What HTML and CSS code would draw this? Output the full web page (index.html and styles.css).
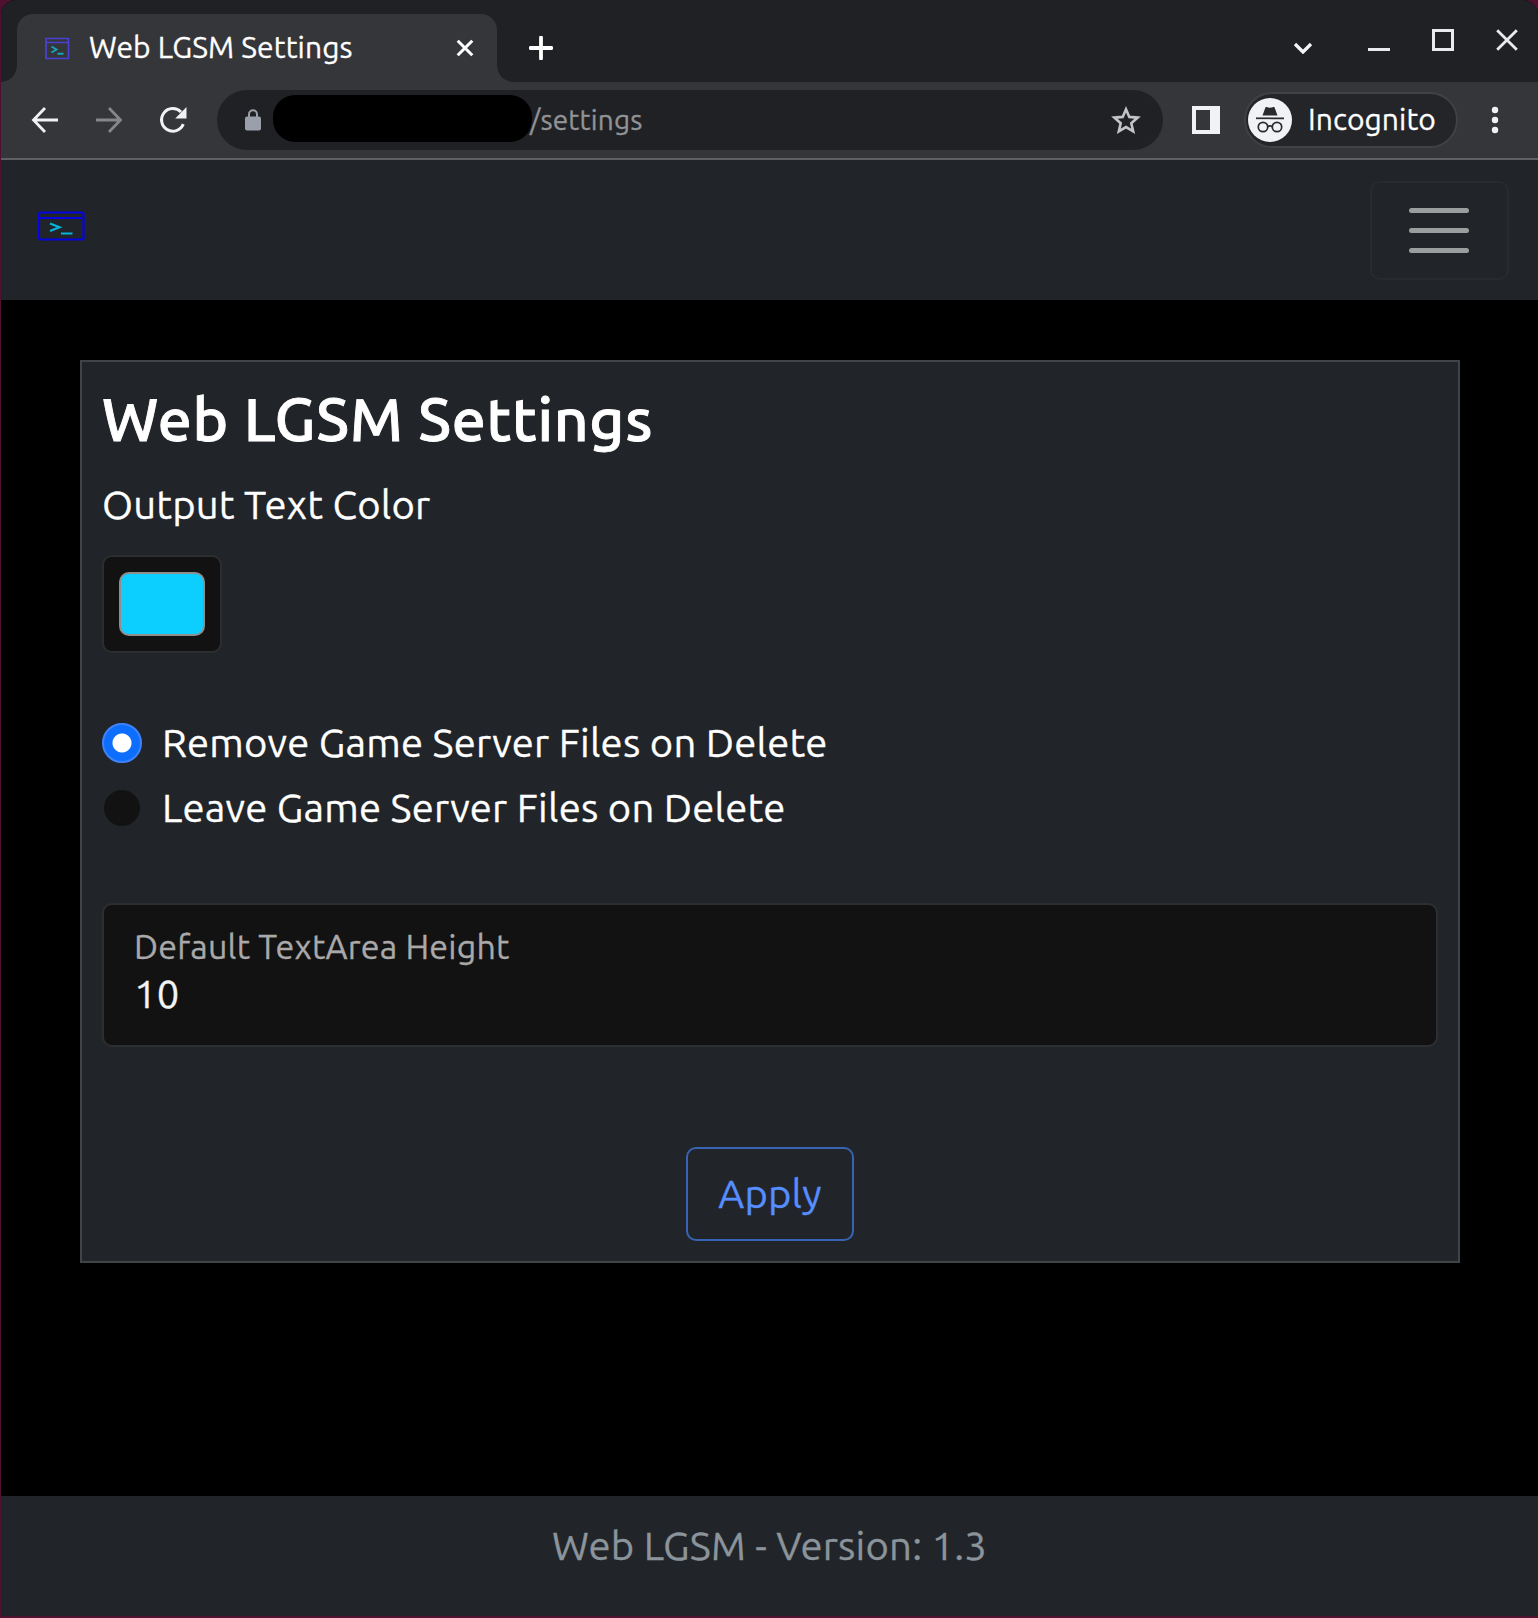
FILE: index.html
```html
<!DOCTYPE html>
<html lang="en">
<head>
<meta charset="utf-8">
<title>Web LGSM Settings</title>
<link rel="stylesheet" href="styles.css">
</head>
<body>
<div class="window">
  <header class="tabstrip">
    <div class="tab">
      <svg class="favicon" width="25" height="23" viewBox="0 0 25 23"><path d="M1 1.500h22.500v20H1zM1 5.500h22.500" fill="none" stroke="#4a41d3" stroke-width="1.700"/><path d="M6.500 9.500l5 3-5 3" fill="none" stroke="#15a5bd" stroke-width="1.900"/><path d="M12.500 16.800h6" stroke="#15a5bd" stroke-width="2"/></svg>
      <span class="tab-title">Web LGSM Settings</span>
      <svg class="tab-close" width="18" height="20" viewBox="0 0 18 20"><path d="M1.700 2.700l14.600 14.600M16.300 2.700L1.700 17.300" stroke="#fff" stroke-width="3"/></svg>
    </div>
    <svg class="new-tab" width="24" height="24" viewBox="0 0 24 24"><path d="M12 1.500v21M1.500 12h21" stroke="#fff" stroke-width="3.800" stroke-linecap="round"/></svg>
    <div class="window-controls">
      <svg class="chevron" width="20" height="12" viewBox="0 0 20 12"><path d="M2 2l8 8 8-8" fill="none" stroke="#f4f5f7" stroke-width="3.300"/></svg>
      <svg width="22" height="22" viewBox="0 0 22 22"><path d="M0 20.500h22" stroke="#e9eaee" stroke-width="3"/></svg>
      <svg width="22" height="22" viewBox="0 0 22 22"><path d="M1.500 1.500h19v19h-19z" fill="none" stroke="#e9eaee" stroke-width="3"/></svg>
      <svg width="22" height="22" viewBox="0 0 22 22"><path d="M1.200 1.200l19.600 19.600M20.800 1.200L1.200 20.800" stroke="#e9eaee" stroke-width="2.800"/></svg>
    </div>
  </header>
  <div class="toolbar">
    <svg class="back" width="28" height="28" viewBox="0 0 28 28"><path d="M27 14H3M14 2L2.500 14 14 26" fill="none" stroke="#f1f2f5" stroke-width="2.800"/></svg>
    <svg class="forward" width="28" height="28" viewBox="0 0 28 28"><path d="M1 14h24M14 2l11.500 12L14 26" fill="none" stroke="#858688" stroke-width="2.800"/></svg>
    <svg class="reload" width="28" height="28" viewBox="0 0 28 28"><path d="M24.300 18.200A11.300 11.300 0 1 1 22 6" fill="none" stroke="#f1f2f5" stroke-width="3"/><path d="M27.500 1v11.500H16.200z" fill="#f1f2f5"/></svg>
    <div class="omnibox">
      <svg class="lock" width="18" height="22" viewBox="0 0 18 22"><rect x="1" y="7.500" width="16" height="14" rx="2" fill="#9aa0a9"/><path d="M5 8V5.200a4 4 0 0 1 8 0V8" fill="none" stroke="#9aa0a9" stroke-width="2"/></svg>
      <span class="redacted"></span>
      <span class="path">/settings</span>
      <svg class="star" width="32" height="31" viewBox="0 0 32 31"><path d="M16 4.200l3.300 7.700 8.400.7-6.400 5.600 1.900 8.200-7.200-4.300-7.200 4.300 1.900-8.200-6.400-5.600 8.400-.7z" fill="none" stroke="#c3c4c6" stroke-width="2.600"/></svg>
    </div>
    <svg class="side-panel" width="28" height="28" viewBox="0 0 28 28"><path fill="#f1f2f5" fill-rule="evenodd" d="M0 0h28v28H0zM4 4v20h14V4z"/></svg>
    <div class="incognito">
      <svg width="44" height="44" viewBox="0 0 44 44"><circle cx="22" cy="22" r="22" fill="#f1f2f6"/><path d="M14.500 17.500l3-8.200c1.500-1 3 .5 4.500.5s3-1.500 4.500-.5l3 8.200z" fill="#292a2e"/><path d="M8 20.300h28" stroke="#292a2e" stroke-width="1.700"/><g fill="none" stroke="#292a2e" stroke-width="1.700"><circle cx="15" cy="29" r="4.700"/><circle cx="29" cy="29" r="4.700"/><path d="M19.700 28.700q2.300-1.700 4.600 0"/></g></svg>
      <span class="incognito-label">Incognito</span>
    </div>
    <svg class="menu" width="8" height="28" viewBox="0 0 8 28"><g fill="#f1f2f5"><circle cx="4" cy="4" r="3.200"/><circle cx="4" cy="14" r="3.200"/><circle cx="4" cy="24" r="3.200"/></g></svg>
  </div>
  <nav class="navbar">
    <svg class="brand" width="48" height="30" viewBox="0 0 48 30"><rect x="2" y="1.500" width="44.500" height="27" rx="1.500" fill="none" stroke="#0505e4" stroke-width="2.200"/><path d="M2 7h43" stroke="#0505e4" stroke-width="2.200"/><path d="M13 12.500l9.500 3.700-9.500 3.700" fill="none" stroke="#06b4dc" stroke-width="2.200"/><path d="M24 22.500h11.500" stroke="#06b4dc" stroke-width="2"/></svg>
    <button class="toggler" aria-label="Menu"><span></span><span></span><span></span></button>
  </nav>
  <main class="content">
    <form class="card">
      <h1>Web LGSM Settings</h1>
      <span class="color-label">Output Text Color</span>
      <div class="color-input"><span class="swatch"></span></div>
      <div class="options">
        <div class="option"><span class="radio checked"></span><span class="option-label">Remove Game Server Files on Delete</span></div>
        <div class="option"><span class="radio"></span><span class="option-label">Leave Game Server Files on Delete</span></div>
      </div>
      <div class="field"><span class="field-label">Default TextArea Height</span><span class="field-value">10</span></div>
      <div class="apply"><span>Apply</span></div>
    </form>
  </main>
  <footer class="footer"><span>Web LGSM - Version: 1.3</span></footer>
</div>
</body>
</html>
```
FILE: styles.css
```css
* { box-sizing: border-box; }
svg { display: block; flex: none; }
body {
  margin: 0;
  background: #4e1130;
  font-family: Ubuntu, "Noto Sans", "Open Sans", sans-serif;
  font-size: 40px;
  letter-spacing: 0.190px;
  -webkit-text-stroke: 0.300px;
  color: #fff;
}
span { white-space: nowrap; }
.window {
  display: flex;
  flex-direction: column;
  height: 1616px;
  margin-left: 1px;
  border-radius: 15px 15px 0 0;
  overflow: hidden;
  background: #000;
}

/* browser frame */
.tabstrip {
  display: flex;
  flex: none;
  height: 82px;
  padding: 14px 20px 0 16px;
  background: #202124;
}
.tab {
  position: relative;
  display: flex;
  align-items: center;
  width: 480px;
  height: 68px;
  padding: 0 23px 0 28px;
  border-radius: 16px 16px 0 0;
  background: #35363a;
}
.tab::before,
.tab::after {
  content: "";
  position: absolute;
  bottom: 0;
  width: 16px;
  height: 16px;
}
.tab::before { right: 100%; background: radial-gradient(circle at 0 0, transparent 15.500px, #35363a 16px); }
.tab::after { left: 100%; background: radial-gradient(circle at 100% 0, transparent 15.500px, #35363a 16px); }
.tab-title { margin: -2px 0 0 19px; font-size: 30px; letter-spacing: 0.120px; }
.tab-close { margin-left: auto; }
.new-tab { margin: 22px 0 0 32px; }
.window-controls {
  display: flex;
  gap: 42px;
  margin-left: auto;
  padding-top: 15px;
}
.chevron { margin: 13px 13px 0 0; }

.toolbar {
  display: flex;
  flex: none;
  align-items: center;
  height: 78px;
  padding: 0 39px 0 30px;
  border-bottom: 2px solid #5f6063;
  background: #35363a;
}
.forward { margin-left: 36px; }
.reload { margin-left: 36px; }
.omnibox {
  display: flex;
  align-items: center;
  width: 946px;
  height: 60px;
  margin-left: 30px;
  padding: 0 21px 0 27px;
  border-radius: 30px;
  background: #202124;
}
.redacted {
  width: 259px;
  height: 47px;
  margin: -3px 0 0 11px;
  border-radius: 22px;
  background: #000;
}
.path { margin: -2px 0 0 -2px; font-size: 28px; color: #919396; }
.star { margin-left: auto; }
.side-panel { margin-left: 29px; }
.incognito {
  display: flex;
  align-items: center;
  width: 214px;
  height: 56px;
  margin-left: 24px;
  padding-left: 2px;
  border: 2px solid #404145;
  border-radius: 28px;
  background: #242529;
}
.incognito-label { margin: -3px 0 0 16px; font-size: 30px; letter-spacing: 0.080px; }
.menu { margin-left: auto; }

/* page */
.navbar {
  display: flex;
  flex: none;
  align-items: center;
  justify-content: space-between;
  height: 140px;
  padding: 0 29px 0 36px;
  background: #212529;
}
.brand { margin-top: -8px; }
.toggler {
  display: flex;
  flex-direction: column;
  align-items: center;
  justify-content: center;
  gap: 15px;
  width: 139px;
  height: 99px;
  padding: 0 1px 0 0;
  border: 2px solid #272b2f;
  border-radius: 10px;
  background: none;
}
.toggler span { width: 60px; height: 5px; border-radius: 3px; background: #9b9d9f; }
.content { flex: 1; padding: 60px 78px 0 79px; }
.card {
  display: flex;
  flex-direction: column;
  align-items: flex-start;
  height: 903px;
  padding: 21px 20px 20px;
  border: 2px solid #404448;
  background: #212529;
}
h1 {
  margin: 0;
  font-size: 60.500px;
  font-weight: 500;
  letter-spacing: 0.680px;
  -webkit-text-stroke: 0.900px;
  line-height: 72px;
  white-space: nowrap;
}
.color-label { margin-top: 20px; line-height: 60px; }
.color-input {
  width: 120px;
  height: 98px;
  margin-top: 20px;
  padding: 15px;
  border: 2px solid #2c2d2f;
  border-radius: 10px;
  background: #121212;
}
.swatch {
  display: block;
  height: 64px;
  border: 2px solid #8e8e8e;
  border-radius: 10px;
  background: #0dcfff;
}
.options { display: grid; gap: 5px; margin-top: 60px; }
.option { display: flex; align-items: center; gap: 20px; height: 60px; }
.option-label { margin-top: -2px; }
.radio {
  width: 40px;
  height: 40px;
  border: 2px solid #212529;
  border-radius: 50%;
  background: #121212;
}
.radio.checked {
  border-color: #3f83fb;
  background: radial-gradient(circle, #fff 9px, #0d6efd 10px);
}
.field {
  display: flex;
  flex-direction: column;
  align-self: stretch;
  height: 144px;
  margin-top: 65px;
  padding: 18px 30px;
  border: 2px solid #2d2e30;
  border-radius: 10px;
  background: #121212;
}
.field-label { font-size: 34px; line-height: 46px; color: #a9a9a9; }
.field-value { line-height: 50px; color: #f1f4f7; }
.apply {
  align-self: center;
  width: 168px;
  height: 94px;
  margin-top: 100px;
  border: 2px solid #3862b2;
  border-radius: 10px;
  line-height: 90px;
  text-align: center;
  color: #568dff;
}
.footer {
  flex: none;
  height: 120px;
  line-height: 99px;
  text-align: center;
  background: #212529;
  color: #8c949b;
}
```
